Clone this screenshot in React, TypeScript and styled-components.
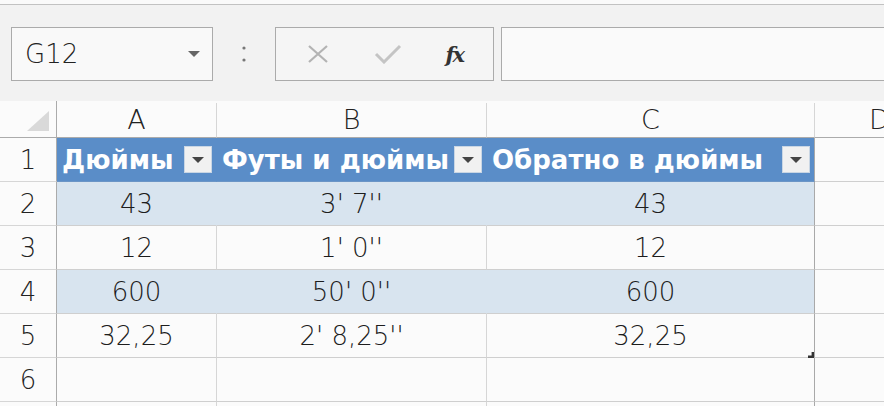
import React from 'react'
import styled, { createGlobalStyle } from 'styled-components'

const GlobalStyle = createGlobalStyle`
  html, body {
    margin: 0;
    padding: 0;
    background: #fbfbfb;
    overflow: hidden;
  }
  body {
    font-family: "DejaVu Sans", "Liberation Sans", sans-serif;
    color: #222;
  }
`

const Page = styled.div`
  width: 884px;
  height: 406px;
  display: flex;
  flex-direction: column;
  overflow: hidden;

  & > * {
    flex-shrink: 0;
  }
`

const TopEdge = styled.div`
  height: 4px;
  background: #fafafa;
  border-bottom: 1px solid #c2c2c2;
`

const Toolbar = styled.div`
  height: 96px;
  box-sizing: border-box;
  background: #f2f2f2;
  display: flex;
  align-items: flex-start;
  padding: 22px 0 0 11px;
`

const NameBox = styled.div`
  width: 202px;
  height: 54px;
  box-sizing: border-box;
  border: 1px solid #ababab;
  background: #f9f9f9;
  display: flex;
  align-items: center;
  justify-content: space-between;
  padding: 0 12px 0 13px;
  font-size: 26px;
  font-weight: 300;
  color: #222;
`

const Caret = styled.span<{ $color?: string }>`
  width: 0;
  height: 0;
  border-left: 6px solid transparent;
  border-right: 6px solid transparent;
  border-top: 6px solid ${(p) => p.$color ?? '#666'};
`

const Splitter = styled.div`
  width: 62px;
  height: 54px;
  display: flex;
  align-items: center;
  justify-content: center;
`

const ButtonBox = styled.div`
  width: 219px;
  height: 54px;
  box-sizing: border-box;
  border: 1px solid #ababab;
  background: #f5f5f5;
  display: flex;
  align-items: center;
  justify-content: space-around;
  padding: 0 8px;
`

const Fx = styled.span`
  font-family: "DejaVu Serif", "Liberation Serif", serif;
  font-style: italic;
  font-weight: 700;
  font-size: 21px;
  color: #333;
  letter-spacing: -2px;
`

const FormulaBox = styled.div`
  flex: 1;
  height: 54px;
  margin-left: 7px;
  box-sizing: border-box;
  border: 1px solid #ababab;
  border-right: none;
  background: #fafafa;
`

const Sheet = styled.div`
  position: relative;
  display: grid;
  grid-template-columns: 57px 160px 270px 328px 130px;
  grid-template-rows: 37px repeat(7, 44px);
  background: #fbfbfb;
`

const ColHead = styled.div`
  border-right: 1px solid #d6d6d6;
  border-bottom: 1px solid #ababab;
  margin-top: 2px;
  display: flex;
  align-items: flex-end;
  justify-content: center;
  font-size: 27px;
  font-weight: 200;
  color: #222;
  line-height: 1;
  padding-bottom: 4px;
  box-sizing: border-box;
`

const Corner = styled.div`
  border-right: 1px solid #ababab;
  border-bottom: 1px solid #ababab;
  display: flex;
  align-items: flex-end;
  justify-content: flex-end;
  padding: 0 7px 6px 0;
  box-sizing: border-box;
`

const RowHead = styled.div`
  border-right: 1px solid #ababab;
  border-bottom: 1px solid #d6d6d6;
  display: flex;
  align-items: center;
  justify-content: center;
  font-size: 26px;
  font-weight: 200;
  color: #222;
  box-sizing: border-box;
`

type CellProps = { $band?: 'head' | 'stripe' | 'plain' | 'empty'; $last?: boolean }

const Cell = styled.div<CellProps>`
  box-sizing: border-box;
  display: flex;
  align-items: center;
  justify-content: center;
  font-size: 26px;
  font-weight: 300;
  color: #1d1d1d;
  white-space: nowrap;
  overflow: hidden;
  background: ${(p) =>
    p.$band === 'head' ? '#5a8dc8' : p.$band === 'stripe' ? '#d8e4ef' : 'transparent'};
  border-bottom: 1px solid
    ${(p) => (p.$band === 'head' ? '#6b95c6' : '#cfcfcf')};
  border-right: 1px solid
    ${(p) =>
      p.$last ? '#a9a9a9' : p.$band === 'head' || p.$band === 'stripe' ? 'transparent' : '#d6d6d6'};
`

const HeadCell = styled(Cell)`
  justify-content: space-between;
  padding: 0 4px 0 5px;
  color: #fff;
  font-weight: 700;
  font-size: 26px;
  letter-spacing: 0;
`

const FilterButton = styled.span`
  width: 28px;
  height: 27px;
  flex-shrink: 0;
  box-sizing: border-box;
  background: #f1f1f1;
  border: 1px solid #c9d6e4;
  display: flex;
  align-items: center;
  justify-content: center;
`

const ResizeMark = styled.span`
  position: absolute;
  left: 808px;
  top: 251px;
  width: 6px;
  height: 6px;
  background: #333;
  clip-path: polygon(100% 0, 100% 100%, 0 100%, 0 60%, 60% 60%, 60% 0);
`

const columns = ['A', 'B', 'C', 'D']
const headers = ['Дюймы', 'Футы и дюймы', 'Обратно в дюймы']
const rows = [
  ['43', '3\' 7\'\'', '43'],
  ['12', '1\' 0\'\'', '12'],
  ['600', '50\' 0\'\'', '600'],
  ['32,25', '2\' 8,25\'\'', '32,25'],
]

const CornerTriangle = () => (
  <svg width="22" height="20" viewBox="0 0 22 20">
    <polygon points="22,0 22,20 0,20" fill="#d9d9d9" />
  </svg>
)

const CancelIcon = () => (
  <svg width="24" height="20" viewBox="0 0 24 20">
    <path d="M3 2 L21 18 M21 2 L3 18" stroke="#b3b3b3" strokeWidth="2.2" fill="none" />
  </svg>
)

const EnterIcon = () => (
  <svg width="28" height="20" viewBox="0 0 28 20">
    <path d="M2 10 L10 18 L26 2" stroke="#c4c4c4" strokeWidth="3" fill="none" />
  </svg>
)

const Dots = () => (
  <svg width="6" height="20" viewBox="0 0 6 20">
    <circle cx="3" cy="4" r="1.6" fill="#777" />
    <circle cx="3" cy="16" r="1.6" fill="#777" />
  </svg>
)

export default function App() {
  return (
    <Page>
      <GlobalStyle />
      <TopEdge />
      <Toolbar>
        <NameBox>
          G12
          <Caret $color="#666" />
        </NameBox>
        <Splitter>
          <Dots />
        </Splitter>
        <ButtonBox>
          <CancelIcon />
          <EnterIcon />
          <Fx>fx</Fx>
        </ButtonBox>
        <FormulaBox />
      </Toolbar>
      <Sheet>
        <Corner>
          <CornerTriangle />
        </Corner>
        {columns.map((c) => (
          <ColHead key={c}>{c}</ColHead>
        ))}

        <RowHead>1</RowHead>
        {headers.map((h, i) => (
          <HeadCell key={h} $band="head" $last={i === 2}>
            {h}
            <FilterButton>
              <Caret $color="#444" />
            </FilterButton>
          </HeadCell>
        ))}
        <Cell $band="empty" />

        {rows.map((r, ri) => (
          <React.Fragment key={ri}>
            <RowHead>{ri + 2}</RowHead>
            {r.map((v, ci) => (
              <Cell key={ci} $band={ri % 2 === 0 ? 'stripe' : 'plain'} $last={ci === 2}>
                {v}
              </Cell>
            ))}
            <Cell $band="empty" />
          </React.Fragment>
        ))}

        {[6, 7].map((n) => (
          <React.Fragment key={n}>
            <RowHead>{n === 6 ? n : ''}</RowHead>
            <Cell $band="empty" />
            <Cell $band="empty" />
            <Cell $band="empty" $last />
            <Cell $band="empty" />
          </React.Fragment>
        ))}
        <ResizeMark />
      </Sheet>
    </Page>
  )
}
